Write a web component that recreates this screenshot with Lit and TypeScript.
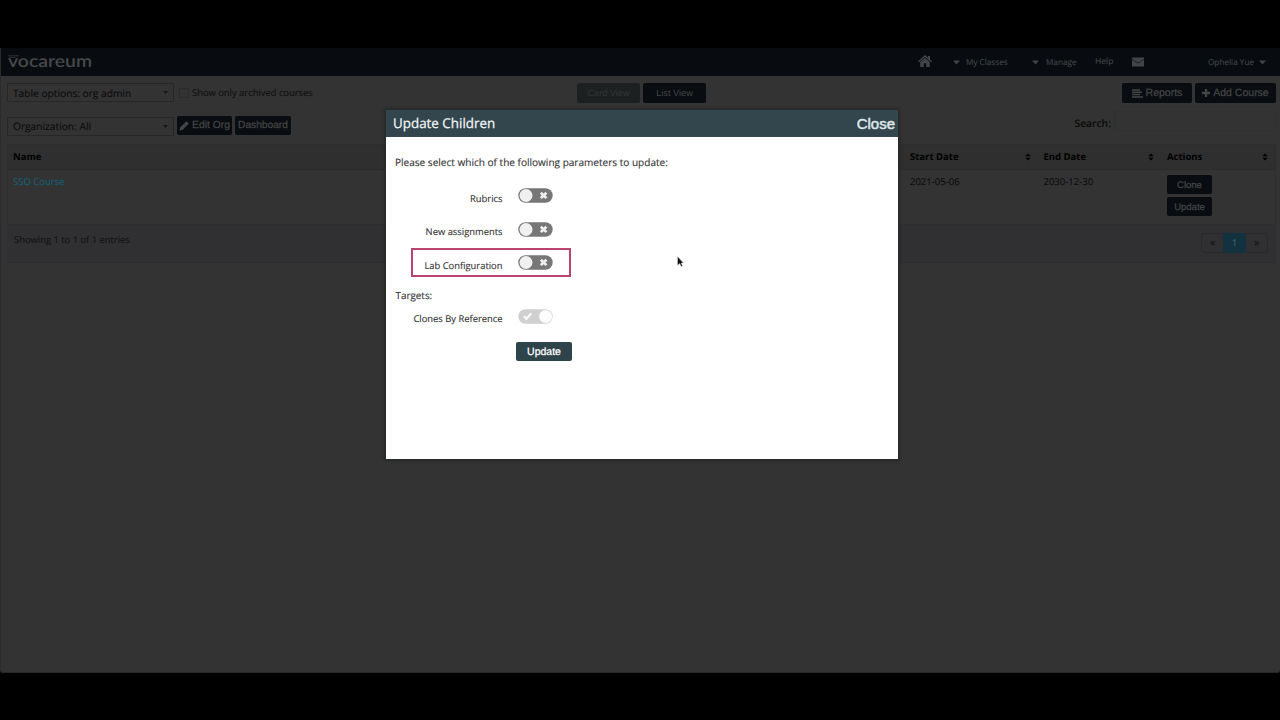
import { LitElement, html, css, svg } from "lit";
import { customElement, property } from "lit/decorators.js";

@customElement("toggle-switch")
class ToggleSwitch extends LitElement {
  @property({ type: Boolean }) on = false;
  static styles = css`
    :host { display: block; width: 35px; height: 15px; }
    svg { display: block; }
  `;
  render() {
    return this.on
      ? html`<svg width="35" height="15" viewBox="0 0 35 15">
          <rect x=".3" y=".2" width="34.4" height="14.6" rx="7.3" fill="#d0d0d0" />
          <circle cx="27.600" cy="7.500" r="6.500" fill="#fdfdfd" />
          <path d="M5.800 7.300l2.600 2.500 4.800-5.300" fill="none" stroke="#fafafa" stroke-width="2.200" />
        </svg>`
      : html`<svg width="35" height="15" viewBox="0 0 35 15">
          <rect x=".3" y=".2" width="34.4" height="14.6" rx="7.3" fill="#777" />
          <circle cx="8" cy="7.500" r="6.500" fill="#f0f0f0" />
          <path d="M22.800 4.700l5.600 5.400M28.400 4.700l-5.600 5.400" fill="none" stroke="#f0f0f0" stroke-width="2.700" />
        </svg>`;
  }
}

const caret = svg`<path d="M0 0h7.4L3.7 4.4z" fill="currentColor"/>`;

@customElement("app-root")
class AppRoot extends LitElement {
  static styles = css`
    :host { display: block; width: 1280px; height: 720px; background: #000; overflow: hidden; font-family: "Open Sans", sans-serif; text-rendering: geometricPrecision; }
    * { box-sizing: border-box; }
    svg { display: block; flex: none; }
    .frame { padding-top: 48px; height: 720px; position: relative; white-space: nowrap; }
    .page { height: 625px; background: #333; border-bottom: 1px solid #292929; color: #0c0c0c; font-size: 9.5px; overflow: hidden; border-radius: 0 0 3px 3px; border-left: 1px solid #2b2b2b; -webkit-text-stroke: .12px currentColor; }
    .nav { height: 28px; background: #080c10; margin-left: -1px; padding-left: 8px; display: flex; align-items: center; color: #424547; }
    .logo { width: 84px; height: 18px; overflow: visible; }
    .logo text { font: 600 17px Lato, sans-serif; fill: #47494b; }
    .menu { display: flex; align-items: center; margin-left: auto; font-size: 8.2px; height: 27px; width: 362px; }
    .menu > * { flex: none; }
    .home { margin-right: 21px; margin-top: -3px; }
    .my { margin-left: 6px; width: 66px; }
    .mng { margin-left: 7px; width: 49px; }
    .help { width: 37px; font-size: 8.5px; margin-top: -1px; }
    .user { margin-left: 64px; width: 51px; font-size: 8.2px; }
    .tools { display: flex; height: 20px; margin: 7px 4px 0 6px; }
    .tools.second { margin-top: 13px; align-items: flex-start; }
    .select { width: 167px; height: 19px; border: 1px solid #272727; display: flex; align-items: center; justify-content: space-between; padding: 0 5px; font-size: 10.2px; }
    .second .select { margin-top: 1px; padding-bottom: 1px; }
    .select svg { opacity: .75; }
    .check { width: 10px; height: 10px; border: 1px solid #2a2a2a; border-radius: 2px; margin: 5px 3px 0 5px; }
    .arch { line-height: 19px; width: 385px; font-size: 9.4px; color: #101010; }
    .btn { font: 10.5px "Liberation Sans", sans-serif; background: #090d11; color: #444546; height: 20px; border-radius: 2px; display: flex; align-items: center; justify-content: center; gap: 3px; -webkit-text-stroke: .25px currentColor; }
    .card { width: 63px; font-size: 9.2px; background: #1c2021; color: #343637; -webkit-text-stroke: 0; }
    .list { width: 63px; margin-left: 3px; font-size: 9.2px; -webkit-text-stroke: 0; }
    .reports { width: 70px; margin-left: auto; }
    .add { width: 81px; margin-left: 3px; }
    .edit { width: 55px; height: 19px; margin-left: 3px; font-size: 10.3px; }
    .dash { width: 56px; height: 19px; margin-left: 3px; font-size: 10.2px; }
    .search { margin: -5px 0 0 auto; display: flex; align-items: center; gap: 3px; font-weight: 600; font-size: 10.3px; height: 20px; }
    .search i { width: 162px; height: 20px; border: 1px solid #303030; }
    .search span { padding-top: 6px; }
    .table { margin: 8px 4px 0 6px; border: 1px solid #2d2d2d; }
    .row { display: grid; grid-template-columns: 897px 133.5px 123.5px 1fr; padding-left: 5px; }
    .head { height: 25px; background: #2f2f2f; border-bottom: 1px solid #2b2b2b; font-weight: 700; font-size: 9.5px; color: #000; line-height: 23px; -webkit-text-stroke: 0; }
    .head div { display: flex; justify-content: space-between; align-items: center; padding: 0 13px 1px 0; }
    .head div:last-child { padding-right: 7px; }
    .body { height: 54px; line-height: 23px; font-size: 9.5px; }
    .body a { color: #146074; }
    .acts { padding-top: 5px; display: flex; flex-direction: column; gap: 3px; }
    .acts .btn { width: 45px; height: 19px; font-size: 9.5px; padding-top: 1px; }
    .foot { height: 38px; margin: 0 4px 0 6px; background: #303032; border-bottom: 1px solid #2d2d2f; display: flex; justify-content: space-between; padding: 0 8px 0 7px; color: #121212; }
    .foot > span { line-height: 30px; font-size: 9.4px; }
    .pager { display: flex; height: 20px; margin-top: 8px; border: 1px solid #292929; border-radius: 3px; line-height: 18px; text-align: center; width: 67px; }
    .pager span { width: 21px; font-size: 10.5px; }
    .pager b { width: 23px; background: #133240; margin: -1px 0; line-height: 20px; font-weight: 400; color: #4a626c; font-size: 9.5px; }
    .modal { position: absolute; left: 385px; top: 109px; width: 514px; height: 351px; border: 1px solid #252a2d; background: #fff; color: #333; font-size: 9.6px; box-shadow: 0 0 3px #222; -webkit-text-stroke: .12px currentColor; }
    .bar { height: 27px; background: #33454d; color: #f0f4f5; display: flex; justify-content: space-between; align-items: center; padding: 0 3px 2px 7px; font-size: 13.4px; -webkit-text-stroke: .25px currentColor; }
    .bar button { border: 0; background: none; padding: 2px 0 0; color: #dfe7ea; font: 15px "Liberation Sans", sans-serif; -webkit-text-stroke: .5px currentColor; }
    .intro { line-height: 16px; margin: 17px 0 0 9px; font-size: 10.05px; }
    .opt { display: flex; margin-left: 25px; width: 160px; height: 29px; padding: 7px 0 0; margin-bottom: 4.5px; }
    .opt span { width: 91.5px; text-align: right; margin-right: 15.5px; line-height: 17px; font-size: 9.4px; padding-top: 1.5px; }
    .opts { padding-top: 11px; }
    .hot { outline: 2px solid #b9446f; outline-offset: -2px; }
    .tg { line-height: 14px; margin: 11px 0 0 9.5px; font-size: 9.9px; }
    .last { margin-bottom: 0; padding-top: 6.5px; }
    .go { font-size: 10.5px; color: #fff; background: #2f434b; width: 56px; height: 19px; margin: 11px 0 0 130px; border-radius: 2px; }
    .cursor { position: absolute; left: 676px; top: 254.5px; }
  `;

  pencil() { return html`<svg width="10" height="10" viewBox="0 0 10 10"><path d="M.4 9.6l.7-3.1L6.8.8q.7-.6 1.4 0l1 1q.6.7 0 1.4L3.5 8.9z" fill="currentColor"/></svg>`; }
  drop(w = 7) { return html`<svg width=${w} height="5" viewBox="0 0 7.4 4.4">${caret}</svg>`; }
  sort() { return html`<svg width="6" height="8" viewBox="0 0 6 8"><path d="M.3 3.2L3 .4l2.7 2.8zM.3 4.8L3 7.6l2.7-2.8z" fill="currentColor"/></svg>`; }

  render() {
    return html`<div class="frame">
      <div class="page">
        <div class="nav">
          <svg class="logo" viewBox="0 0 84 18"><text x="0" y="14.2" textLength="84" lengthAdjust="spacingAndGlyphs">vocareum</text><path d="M0 2.800h11M1.500 4.500h6" stroke="#35383a" stroke-width=".8"/></svg>
          <div class="menu">
            <svg class="home" width="14" height="12" viewBox="0 0 14 12"><path d="M7 0L0 6.200l.9 1L7 2l6.100 5.200.9-1-2-1.800V1H10v1.500zM2.200 7L7 3l4.800 4v5H8.200V8.300H5.800V12H2.200z" fill="currentColor"/></svg>
            ${this.drop()}<span class="my">My Classes</span>
            ${this.drop()}<span class="mng">Manage</span>
            <span class="help">Help</span>
            <svg width="12" height="10" viewBox="0 0 12 10"><path d="M0 .5h12v1.400L6 5.800 0 1.900zM0 2.600l6 3.900 6-3.900v6.900H0z" fill="currentColor"/></svg>
            <span class="user">Ophelia Yue</span>${this.drop()}
          </div>
        </div>
        <div class="tools">
          <div class="select">Table options: org admin ${this.drop(5)}</div>
          <i class="check"></i><span class="arch">Show only archived courses</span>
          <div class="btn card">Card View</div><div class="btn list">List View</div>
          <div class="btn reports"><svg width="11" height="9" viewBox="0 0 11 9"><path d="M0 1h8M0 3.300h10M0 5.600h8M0 8h11" stroke="currentColor" stroke-width="1.500"/></svg>Reports</div>
          <div class="btn add"><svg width="8" height="8" viewBox="0 0 8 8"><path d="M4 0v8M0 4h8" stroke="currentColor" stroke-width="2.300"/></svg>Add Course</div>
        </div>
        <div class="tools second">
          <div class="select">Organization: All ${this.drop(5)}</div>
          <div class="btn edit">${this.pencil()}Edit Org</div>
          <div class="btn dash">Dashboard</div>
          <label class="search"><span>Search:</span><i></i></label>
        </div>
        <div class="table">
          <div class="row head"><div>Name</div><div>Start Date ${this.sort()}</div><div>End Date ${this.sort()}</div><div>Actions ${this.sort()}</div></div>
          <div class="row body"><a>SSO Course</a><span>2021-05-06</span><span>2030-12-30</span>
            <div class="acts"><div class="btn">Clone</div><div class="btn">Update</div></div></div>
        </div>
        <div class="foot"><span>Showing 1 to 1 of 1 entries</span><div class="pager"><span>«</span><b>1</b><span>»</span></div></div>
      </div>
      <div class="modal">
        <div class="bar"><span>Update Children</span><button>Close</button></div>
        <div class="intro">Please select which of the following parameters to update:</div>
        <div class="opts">
          <div class="opt"><span>Rubrics</span><toggle-switch></toggle-switch></div>
          <div class="opt"><span>New assignments</span><toggle-switch></toggle-switch></div>
          <div class="opt hot"><span>Lab Configuration</span><toggle-switch></toggle-switch></div>
        </div>
        <div class="tg">Targets:</div>
        <div class="opt last"><span>Clones By Reference</span><toggle-switch on></toggle-switch></div>
        <div class="btn go">Update</div>
      </div>
      <svg class="cursor" width="8" height="13" viewBox="0 0 8 13"><path d="M1.500 1.500v9l2.200-1.900 1.400 3 1.400-.7-1.300-2.800h2.300z" fill="#111" stroke="#ddd" stroke-width=".5"/></svg>
    </div>`;
  }
}
